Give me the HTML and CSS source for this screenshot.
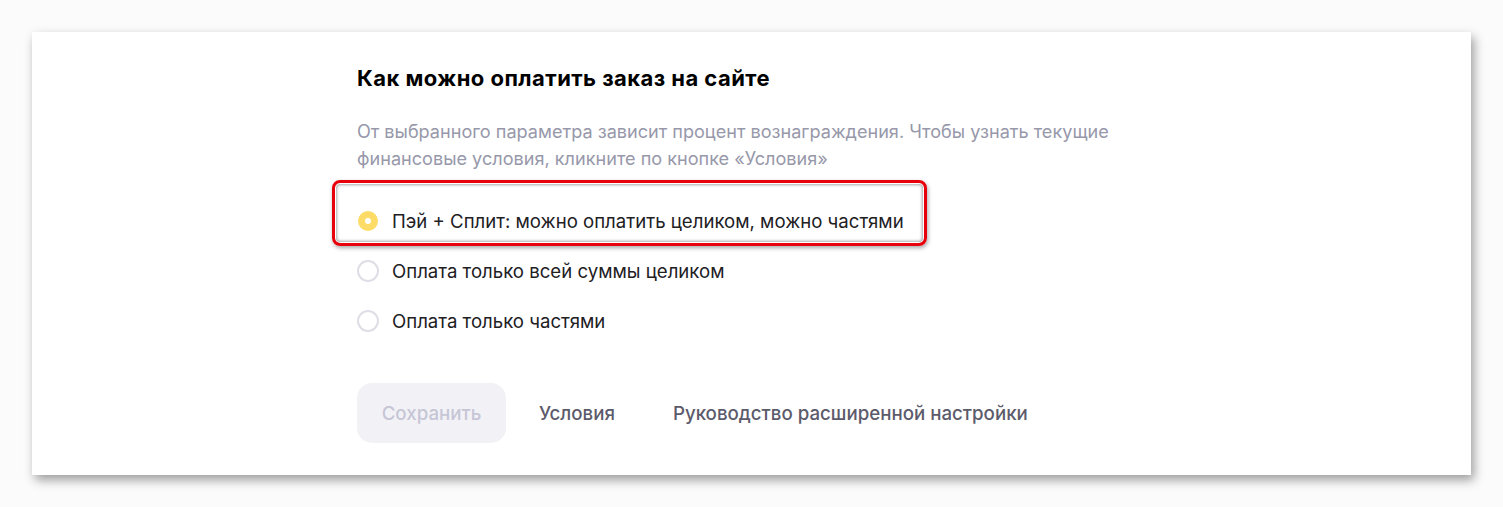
FILE: index.html
```html
<!DOCTYPE html>
<html lang="ru">
<head>
<meta charset="utf-8">
<title>Как можно оплатить заказ на сайте</title>
<link rel="stylesheet" href="styles.css">
</head>
<body>
<div class="card">
  <div class="content">
    <h1 class="title">Как можно оплатить заказ на сайте</h1>
    <p class="desc">От выбранного параметра зависит процент вознаграждения. Чтобы узнать текущие<br>финансовые условия, кликните по кнопке «Условия»</p>
    <div class="options">
      <label class="option option-highlighted">
        <span class="radio radio-checked"></span>
        <span class="option-text">Пэй + Сплит: можно оплатить целиком, можно частями</span>
        <span class="highlight"></span>
      </label>
      <label class="option">
        <span class="radio"></span>
        <span class="option-text">Оплата только всей суммы целиком</span>
      </label>
      <label class="option">
        <span class="radio"></span>
        <span class="option-text">Оплата только частями</span>
      </label>
    </div>
    <div class="actions">
      <button class="btn-save" disabled>Сохранить</button>
      <a class="link link-terms">Условия</a>
      <a class="link link-guide">Руководство расширенной настройки</a>
    </div>
  </div>
</div>
</body>
</html>
```

FILE: styles.css
```css
* { box-sizing: border-box; }

html, body {
  margin: 0;
  padding: 0;
}

body {
  background: #fbfbfb;
  font-family: "Inter", "Noto Sans", sans-serif;
  color: #21201f;
  width: 1503px;
  height: 507px;
  overflow: hidden;
}

.card {
  margin: 32px 0 0 32px;
  width: 1439px;
  height: 443px;
  background: #fff;
  box-shadow: 3px 5px 10px rgba(0, 0, 0, 0.38);
}

.content {
  padding: 32px 0 0 325px;
  display: flex;
  flex-direction: column;
  align-items: flex-start;
}

.title {
  margin: 0;
  font-size: 22px;
  line-height: 28px;
  font-weight: 700;
  letter-spacing: 0.45px;
  color: #000;
}

.desc {
  margin: 26px 0 0;
  font-size: 18.1px;
  line-height: 27px;
  color: #9798aa;
}

.options {
  margin-top: 24px;
  display: flex;
  flex-direction: column;
}

.option {
  position: relative;
  display: flex;
  align-items: center;
  gap: 13px;
  height: 50px;
  font-size: 18.6px;
  color: #21201f;
}

.radio {
  width: 22px;
  height: 22px;
  border-radius: 50%;
  border: 2px solid #dedee6;
  background: #fff;
  flex: none;
}

.radio-checked {
  width: 20px;
  height: 20px;
  margin: 0 1px;
  border: 7px solid #fcdc66;
}

.highlight {
  position: absolute;
  left: -25px;
  top: -16px;
  width: 595px;
  height: 66px;
  border: 3px solid #e8000b;
  border-radius: 8px;
  box-shadow:
    inset 0 0 0 1px #fff,
    inset 0 0 3px 2px rgba(0, 0, 0, 0.35),
    1px 2px 4px rgba(0, 0, 0, 0.35);
  pointer-events: none;
}

.actions {
  margin-top: 37px;
  display: flex;
  align-items: center;
}

.btn-save {
  height: 60px;
  width: 149px;
  padding: 0;
  border: none;
  border-radius: 15px;
  background: #f2f2f6;
  color: #c6c6d6;
  font-family: inherit;
  font-size: 18.7px;
  font-weight: 500;
}

.link {
  font-size: 18.7px;
  font-weight: 500;
  color: #5c5b6b;
}

.link-terms {
  margin-left: 33px;
}

.link-guide {
  margin-left: 58px;
}
```
